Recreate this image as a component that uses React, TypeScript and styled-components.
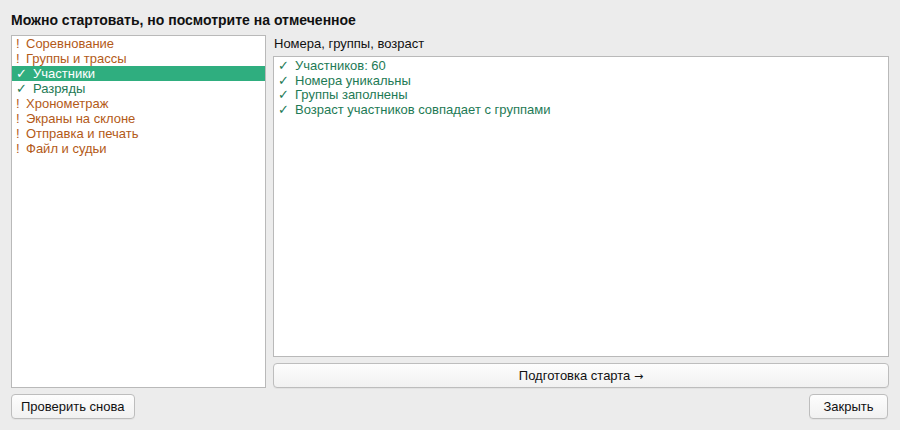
import React from 'react';
import styled, { createGlobalStyle } from 'styled-components';

const GlobalStyle = createGlobalStyle`
  html, body {
    margin: 0;
    padding: 0;
    background: #ececec;
  }
  body {
    font-family: "Liberation Sans", Arial, sans-serif;
    font-size: 13px;
    color: #1a1a1a;
  }
`;

type Status = 'warn' | 'ok';

interface Section {
  title: string;
  status: Status;
}

const sections: Section[] = [
  { title: 'Соревнование', status: 'warn' },
  { title: 'Группы и трассы', status: 'warn' },
  { title: 'Участники', status: 'ok' },
  { title: 'Разряды', status: 'ok' },
  { title: 'Хронометраж', status: 'warn' },
  { title: 'Экраны на склоне', status: 'warn' },
  { title: 'Отправка и печать', status: 'warn' },
  { title: 'Файл и судьи', status: 'warn' },
];

const checks = [
  'Участников: 60',
  'Номера уникальны',
  'Группы заполнены',
  'Возраст участников совпадает с группами',
];

const colors = {
  warn: '#b35a18',
  ok: '#1e7a55',
  selected: '#2fae7f',
  border: '#b9b9b9',
};

const Window = styled.div`
  width: 900px;
  height: 430px;
  box-sizing: border-box;
  padding: 11px 11px 11px 11px;
  display: flex;
  flex-direction: column;
`;

const Heading = styled.h1`
  margin: 0 0 6px 0;
  font-size: 14px;
  font-weight: bold;
  line-height: 18px;
  color: #111;
`;

const Body = styled.div`
  flex: 1;
  display: grid;
  grid-template-columns: 255px 1fr;
  gap: 7px;
  min-height: 0;
`;

const SectionList = styled.ul`
  margin: 0;
  padding: 0;
  list-style: none;
  background: #fff;
  border: 1px solid ${colors.border};
`;

const SectionRow = styled.li<{ $status: Status; $selected?: boolean }>`
  height: 15px;
  line-height: 15px;
  padding-left: 4px;
  display: flex;
  white-space: nowrap;
  color: ${({ $status, $selected }) =>
    $selected ? '#fff' : colors[$status]};
  background: ${({ $selected }) => ($selected ? colors.selected : 'transparent')};
`;

const Mark = styled.span<{ $status: Status }>`
  display: inline-block;
  width: ${({ $status }) => ($status === 'ok' ? '17px' : '10px')};
`;

const DetailPane = styled.div`
  display: flex;
  flex-direction: column;
  min-height: 0;
`;

const DetailTitle = styled.div`
  height: 21px;
  line-height: 17px;
  padding-left: 1px;
  color: #111;
`;

const CheckList = styled.ul`
  flex: 1;
  margin: 0;
  padding: 2px 0 0 0;
  list-style: none;
  background: #fff;
  border: 1px solid ${colors.border};
`;

const CheckRow = styled.li`
  height: 14.5px;
  line-height: 14.5px;
  padding-left: 4px;
  color: ${colors.ok};
  white-space: nowrap;
`;

const Arrow = styled.span`
  font-family: "DejaVu Sans", sans-serif;
  font-size: 11px;
`;

const Button = styled.button<{ $wide?: boolean }>`
  box-sizing: border-box;
  height: 25px;
  min-width: 79px;
  padding: 0 9px;
  font-family: inherit;
  font-size: 13px;
  color: #111;
  background: linear-gradient(#fdfdfd, #f1f1f1);
  border: 1px solid #bdbdbd;
  border-radius: 4px;
  box-shadow: 0 1px 0 rgba(0, 0, 0, 0.04);
  width: ${({ $wide }) => ($wide ? '100%' : 'auto')};
`;

const StartRow = styled.div`
  margin-top: 6px;
`;

const Footer = styled.div`
  display: flex;
  justify-content: space-between;
  margin-top: 6px;
  padding-right: 1px;
`;

export default function App() {
  return (
    <>
      <GlobalStyle />
      <Window>
        <Heading>Можно стартовать, но посмотрите на отмеченное</Heading>
        <Body>
          <SectionList>
            {sections.map((s) => (
              <SectionRow key={s.title} $status={s.status} $selected={s.title === 'Участники'}>
                <Mark $status={s.status}>{s.status === 'ok' ? '✓' : '!'}</Mark>
                {s.title}
              </SectionRow>
            ))}
          </SectionList>
          <DetailPane>
            <DetailTitle>Номера, группы, возраст</DetailTitle>
            <CheckList>
              {checks.map((c) => (
                <CheckRow key={c}>
                  <Mark $status="ok">✓</Mark>
                  {c}
                </CheckRow>
              ))}
            </CheckList>
            <StartRow>
              <Button $wide>
                Подготовка старта <Arrow>→</Arrow>
              </Button>
            </StartRow>
          </DetailPane>
        </Body>
        <Footer>
          <Button>Проверить снова</Button>
          <Button>Закрыть</Button>
        </Footer>
      </Window>
    </>
  );
}
